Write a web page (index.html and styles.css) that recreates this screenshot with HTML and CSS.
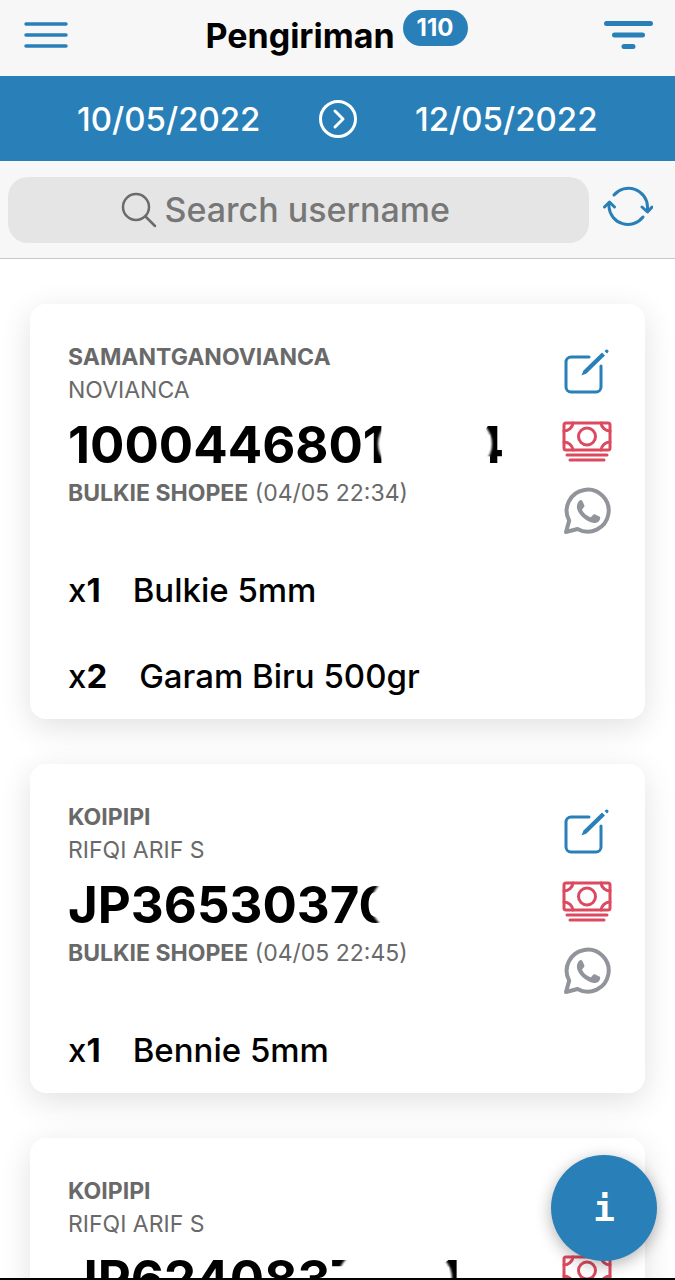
FILE: index.html
```html
<!DOCTYPE html>
<html lang="id">
  <head>
    <meta charset="UTF-8" />
    <meta name="viewport" content="width=device-width, initial-scale=1.0, viewport-fit=cover" />
    <title>Pengiriman</title>
    <link rel="stylesheet" href="styles.css">
  </head>
  <body>
    <!-- icons shared by every card -->
    <svg class="sprite" aria-hidden="true">
      <symbol id="icon-edit" viewBox="0 0 50 50">
        <path d="M27 9H9a5 5 0 0 0-5 5v25a5 5 0 0 0 5 5h25a5 5 0 0 0 5-5V18" fill="none" stroke="currentColor" stroke-width="3" stroke-linecap="round" stroke-linejoin="round" />
        <path d="M40 4.500l3 3L24.500 25.500l-5 2 2-5z" fill="currentColor" />
        <path d="M42.500 3l1-1a1.700 1.700 0 0 1 2.500 2.500l-1 1z" fill="currentColor" />
      </symbol>
      <symbol id="icon-cash" viewBox="0 0 50 50">
        <g fill="none" stroke="currentColor" stroke-width="3" stroke-linecap="round" stroke-linejoin="round">
          <rect x="2" y="6" width="46" height="27" rx="2" />
          <circle cx="25" cy="19.500" r="8.500" />
          <path d="M11 6a9 9 0 0 1-9 8M39 6a9 9 0 0 0 9 8M2 25a9 9 0 0 1 9 8M48 25a9 9 0 0 0-9 8" />
          <path d="M5 38h40M8 43h34" />
        </g>
      </symbol>
      <symbol id="icon-whatsapp" viewBox="0 0 50 50">
        <path d="M4 46l3.200-11.400A21 21 0 1 1 15.500 43z" fill="none" stroke="currentColor" stroke-width="4" stroke-linejoin="round" />
        <path d="M17.500 14.500c.8-.8 2.300-.7 2.800.3l2 4.500c.3.800.1 1.400-.4 2l-1.500 1.800c-.4.500-.3.900 0 1.400 1.900 3.100 4.200 5.100 7.500 6.500.6.300 1.100.2 1.500-.3l1.700-2c.5-.6 1-.7 1.700-.4l4.500 2.200c.7.400 1 .8.900 1.600-.3 3.500-3.200 5.300-6.300 4.900-8.500-1.300-16.500-9.500-17-15.500-.2-3 1-5.400 2.600-7z" fill="currentColor" />
      </symbol>
    </svg>

    <div class="app">
      <header class="toolbar">
        <button class="icon-btn" type="button" aria-label="Menu">
          <svg width="50" height="50" viewBox="0 0 50 50">
            <path d="M6 14h40M6 25h40M6 36h40" stroke="currentColor" stroke-width="3.500" stroke-linecap="round" />
          </svg>
        </button>
        <h1 class="title">Pengiriman <span class="badge">110</span></h1>
        <button class="icon-btn" type="button" aria-label="Filter">
          <svg width="50" height="50" viewBox="0 0 50 50">
            <path d="M3.500 13.500h44M11.500 25h28M21 36.500h9" stroke="currentColor" stroke-width="5" stroke-linecap="round" />
          </svg>
        </button>
      </header>

      <div class="date-bar">
        <input class="date" type="text" value="10/05/2022" aria-label="Dari tanggal" readonly />
        <svg class="date-arrow" width="40" height="40" viewBox="0 0 40 40" fill="none" stroke="currentColor" stroke-width="3" stroke-linecap="round" stroke-linejoin="round">
          <circle cx="20" cy="20" r="17.500" />
          <path d="M17 12l8 8-8 8" />
        </svg>
        <input class="date" type="text" value="12/05/2022" aria-label="Sampai tanggal" readonly />
      </div>

      <div class="search-bar">
        <label class="search">
          <svg width="36" height="36" viewBox="0 0 36 36" fill="none" stroke="currentColor" stroke-width="2.500" stroke-linecap="round">
            <circle cx="15" cy="15" r="13" />
            <path d="M24.500 24.500L34 34" />
          </svg>
          <input class="search-input" type="search" placeholder="Search username" aria-label="Search username" />
        </label>
        <button class="icon-btn" type="button" aria-label="Refresh">
          <svg width="50" height="50" viewBox="0 3 50 50" fill="none" stroke="currentColor" stroke-width="3" stroke-linecap="round" stroke-linejoin="round">
            <path d="M11 13a19 19 0 0 1 33.500 12v3" />
            <path d="M39 25l5.500 5 4.500-5" />
            <path d="M40 35A19 19 0 0 1 6 25v-4" />
            <path d="M1.500 25L6.500 20l5 5" />
          </svg>
        </button>
      </div>

      <main class="list">
        <article class="card">
          <div class="card-head">
            <div class="info">
              <div class="username">SAMANTGANOVIANCA</div>
              <div class="name">NOVIANCA</div>
              <div class="resi">1000446801<span class="smudge"></span>4</div>
              <div class="shop"><b>BULKIE SHOPEE</b> (04/05 22:34)</div>
            </div>
            <div class="actions">
              <button class="action edit" type="button" aria-label="Edit"><svg><use href="#icon-edit" /></svg></button>
              <button class="action cash" type="button" aria-label="Pembayaran"><svg><use href="#icon-cash" /></svg></button>
              <button class="action whatsapp" type="button" aria-label="WhatsApp"><svg><use href="#icon-whatsapp" /></svg></button>
            </div>
          </div>
          <ul class="items">
            <li><span class="qty">x<b>1</b></span>Bulkie 5mm</li>
            <li><span class="qty">x<b>2</b></span>Garam Biru 500gr</li>
          </ul>
        </article>

        <article class="card">
          <div class="card-head">
            <div class="info">
              <div class="username">KOIPIPI</div>
              <div class="name">RIFQI ARIF S</div>
              <div class="resi">JP36530370<span class="smudge deep"></span></div>
              <div class="shop"><b>BULKIE SHOPEE</b> (04/05 22:45)</div>
            </div>
            <div class="actions">
              <button class="action edit" type="button" aria-label="Edit"><svg><use href="#icon-edit" /></svg></button>
              <button class="action cash" type="button" aria-label="Pembayaran"><svg><use href="#icon-cash" /></svg></button>
              <button class="action whatsapp" type="button" aria-label="WhatsApp"><svg><use href="#icon-whatsapp" /></svg></button>
            </div>
          </div>
          <ul class="items">
            <li><span class="qty">x<b>1</b></span>Bennie 5mm</li>
          </ul>
        </article>

        <article class="card">
          <div class="card-head">
            <div class="info">
              <div class="username">KOIPIPI</div>
              <div class="name">RIFQI ARIF S</div>
              <div class="resi">JP6240837<span class="smudge deep"></span>1</div>
            </div>
            <div class="actions">
              <span class="action"></span>
              <button class="action cash" type="button" aria-label="Pembayaran"><svg><use href="#icon-cash" /></svg></button>
            </div>
          </div>
        </article>
      </main>

      <button class="fab" type="button" aria-label="Info">i</button>
    </div>
  </body>
</html>
```

FILE: styles.css
```css
* {
  margin: 0;
  padding: 0;
  box-sizing: border-box;
}
body {
  font-family: "Inter", "Noto Sans", sans-serif;
  font-size: 33px;
  font-weight: 500;
  color: #000;
  background: #fff;
}
button,
input {
  border: 0;
  background: none;
  font: inherit;
  color: inherit;
  outline: 0;
}
svg {
  display: block;
}
.sprite {
  position: absolute;
  width: 0;
  height: 0;
}
.app {
  position: relative;
  display: flex;
  flex-direction: column;
  height: 100vh;
  overflow: hidden;
  border-bottom: 2px solid #000;
}
/* header */
.toolbar {
  display: flex;
  flex: none;
  align-items: center;
  justify-content: space-between;
  height: 76px;
  padding: 0 22px 6px 20px;
  background: #f7f7f7;
}
.icon-btn {
  flex: none;
  color: #2980b9;
}
.title {
  display: flex;
  align-items: center;
  gap: 8px;
  font-size: 34px;
  font-weight: 700;
}
.badge {
  height: 36px;
  padding: 0 14px;
  margin-bottom: 14px;
  border-radius: 18px;
  background: #2980b9;
  color: #fff;
  font-size: 24px;
  line-height: 36px;
}
.date-bar {
  display: flex;
  flex: none;
  align-items: center;
  height: 85px;
  padding: 0 20px;
  background: #2980b9;
  color: #fff;
}
.date {
  flex: 1;
  min-width: 0;
  text-align: center;
}
.search-bar {
  display: flex;
  flex: none;
  align-items: center;
  gap: 14px;
  height: 98px;
  padding: 0 22px 0 8px;
  background: #f7f7f7;
  border-bottom: 1px solid #c8c8c8;
}
.search {
  display: flex;
  flex: 1;
  align-items: center;
  justify-content: center;
  gap: 8px;
  height: 66px;
  border-radius: 20px;
  background: #e5e5e5;
  color: #6b6b6b;
}
.search-input {
  width: 312px;
  font-size: 34px;
}
.search-input::placeholder {
  color: #777;
  opacity: 1;
}
/* list */
.list {
  flex: 1;
  min-height: 0;
  padding: 45px 30px;
  overflow: hidden;
}
.card {
  margin-bottom: 45px;
  border-radius: 16px;
  background: #fff;
  box-shadow: 0 8px 32px rgba(0, 0, 0, 0.12);
}
.card-head {
  display: flex;
  justify-content: space-between;
  padding: 34px 33px 2px 38px;
}
.info {
  padding-top: 3px;
  color: #696969;
  font-size: 23px;
  line-height: 33px;
}
.name,
.shop {
  font-weight: 400;
}
.username {
  font-weight: 700;
}
.resi {
  padding-top: 6px;
  color: #000;
  font-size: 51px;
  font-weight: 700;
  line-height: 64px;
  white-space: nowrap;
}
/* wiped out digits */
.smudge {
  position: relative;
  display: inline-block;
  width: 114px;
  height: 52px;
  margin: 0 -22px 0 -7px;
  border-radius: 26px;
  background: #fff;
  vertical-align: -7px;
  filter: blur(1px);
}
.smudge.deep {
  margin: 0 -14px 0 -22px;
}
.action {
  display: flex;
  align-items: center;
  height: 69px;
}
.action svg {
  width: 50px;
  height: 50px;
}
.edit {
  color: #2980b9;
}
.cash {
  color: #dc4a60;
}
.whatsapp {
  color: #92949c;
}
.items {
  padding: 0 38px;
  list-style: none;
}
.items li {
  line-height: 86px;
}
.qty {
  margin-right: 32px;
}
.fab {
  position: absolute;
  right: 18px;
  bottom: 17px;
  width: 106px;
  height: 106px;
  border-radius: 50%;
  background: #2980b9;
  box-shadow: 0 4px 16px rgba(0, 0, 0, 0.3);
  color: #fff;
  font-family: "DejaVu Sans Mono", monospace;
  font-size: 36px;
  font-weight: 700;
}
```
